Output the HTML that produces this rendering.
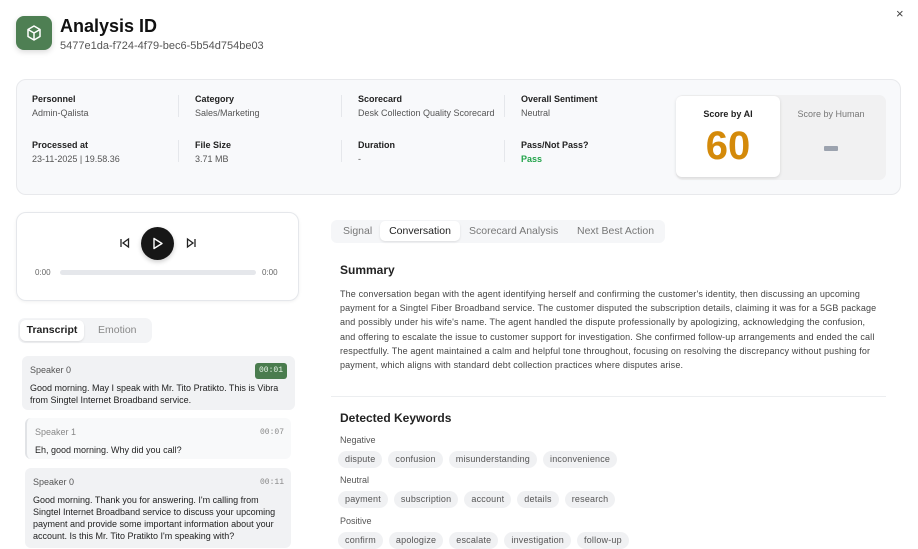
<!DOCTYPE html>
<html><head><meta charset="utf-8"><style>
*{box-sizing:border-box;margin:0;padding:0}
body{width:918px;height:537px;overflow:hidden;background:#fff;font-family:"Liberation Sans",sans-serif;color:#1f2937;position:relative}
.a{position:absolute}
.lbl{font-size:9px;font-weight:bold;color:#222}
.val{font-size:9px;color:#555}
.div{width:1px;height:22px;background:#e5e7eb}
.chip{display:inline-block;background:#f0f1f3;border-radius:9px;font-size:9px;color:#555;padding:3px 7px;margin-right:6px;height:17px;letter-spacing:.2px}
.msg{border-radius:6px;font-size:9px;line-height:12px;color:#222;padding:8px 8px}
.ts{font-family:"Liberation Mono",monospace;font-size:8px;color:#888;position:absolute;right:7px;top:9px}
</style></head><body>
<div class="a" style="left:16px;top:16px;width:36px;height:34px;background:#4e7f53;border-radius:8px;box-shadow:0 2px 6px rgba(0,0,0,.15)">
<svg width="36" height="34" viewBox="0 0 36 34"><g fill="none" stroke="#fff" stroke-width="1.5" stroke-linejoin="round"><path d="M18 10l6 3.5v7L18 24l-6-3.5v-7z"/><path d="M12 13.5l6 3.5 6-3.5M18 17v7"/></g></svg></div>
<div class="a" style="left:60px;top:16px;font-size:18px;font-weight:bold;color:#111">Analysis ID</div>
<div class="a" style="left:60px;top:40px;font-size:11px;color:#555">5477e1da-f724-4f79-bec6-5b54d754be03</div>
<div class="a" style="left:896px;top:6px;font-size:13px;color:#444">×</div>

<div class="a" style="left:16px;top:79px;width:885px;height:116px;background:#f8f9fb;border:1px solid #e8e9ec;border-radius:10px"></div>
<div class="a lbl" style="left:32px;top:94px">Personnel</div><div class="a val" style="left:32px;top:108px">Admin-Qalista</div>
<div class="a lbl" style="left:195px;top:94px">Category</div><div class="a val" style="left:195px;top:108px">Sales/Marketing</div>
<div class="a lbl" style="left:358px;top:94px">Scorecard</div><div class="a val" style="left:358px;top:108px">Desk Collection Quality Scorecard</div>
<div class="a lbl" style="left:521px;top:94px">Overall Sentiment</div><div class="a val" style="left:521px;top:108px">Neutral</div>
<div class="a lbl" style="left:32px;top:140px">Processed at</div><div class="a val" style="left:32px;top:154px">23-11-2025 | 19.58.36</div>
<div class="a lbl" style="left:195px;top:140px">File Size</div><div class="a val" style="left:195px;top:154px">3.71 MB</div>
<div class="a lbl" style="left:358px;top:140px">Duration</div><div class="a val" style="left:358px;top:154px">-</div>
<div class="a lbl" style="left:521px;top:140px">Pass/Not Pass?</div><div class="a val" style="left:521px;top:154px;color:#22a34a;font-weight:bold">Pass</div>
<div class="a div" style="left:178px;top:95px"></div><div class="a div" style="left:341px;top:95px"></div><div class="a div" style="left:504px;top:95px"></div>
<div class="a div" style="left:178px;top:140px"></div><div class="a div" style="left:341px;top:140px"></div><div class="a div" style="left:504px;top:140px"></div>
<div class="a" style="left:676px;top:95px;width:210px;height:85px;background:#f1f1f2;border-radius:7px"></div>
<div class="a" style="left:676px;top:96px;width:104px;height:81px;background:#fff;border-radius:6px;box-shadow:0 1px 3px rgba(0,0,0,.12)"></div>
<div class="a" style="left:676px;top:109px;width:104px;text-align:center;font-size:9px;font-weight:bold;color:#222">Score by AI</div>
<div class="a" style="left:676px;top:123px;width:104px;text-align:center;font-size:40px;font-weight:bold;color:#d48a0a;line-height:46px">60</div>
<div class="a" style="left:780px;top:109px;width:102px;text-align:center;font-size:9px;color:#777">Score by Human</div>
<div class="a" style="left:824px;top:146px;width:14px;height:5px;background:#9ca3af;border-radius:1px"></div>

<div class="a" style="left:16px;top:212px;width:283px;height:89px;border:1px solid #e5e7eb;border-radius:10px;box-shadow:0 1px 3px rgba(0,0,0,.06)"></div>
<svg class="a" style="left:119px;top:237px" width="12" height="12" viewBox="0 0 12 12"><g fill="none" stroke="#222" stroke-width="1.3"><path d="M2 2v8M9.5 2L4 6l5.5 4z"/></g></svg>
<div class="a" style="left:141px;top:227px;width:33px;height:33px;border-radius:50%;background:#171717;box-shadow:0 2px 5px rgba(0,0,0,.2)"></div>
<svg class="a" style="left:151px;top:237px" width="13" height="13" viewBox="0 0 13 13"><path d="M3 1.5l8 5-8 5z" fill="none" stroke="#fff" stroke-width="1.4" stroke-linejoin="round"/></svg>
<svg class="a" style="left:185px;top:237px" width="12" height="12" viewBox="0 0 12 12"><g fill="none" stroke="#222" stroke-width="1.3"><path d="M10 2v8M2.5 2L8 6l-5.5 4z"/></g></svg>
<div class="a" style="left:35px;top:268px;font-size:8px;color:#666">0:00</div>
<div class="a" style="left:60px;top:270px;width:196px;height:5px;background:#e5e7eb;border-radius:3px"></div>
<div class="a" style="left:262px;top:268px;font-size:8px;color:#666">0:00</div>

<div class="a" style="left:18px;top:318px;width:134px;height:25px;background:#f3f4f6;border-radius:7px"></div>
<div class="a" style="left:20px;top:320px;width:64px;height:21px;background:#fff;border-radius:6px;box-shadow:0 1px 2px rgba(0,0,0,.1);font-size:10.5px;font-weight:bold;text-align:center;line-height:21px;color:#222">Transcript</div>
<div class="a" style="left:98px;top:324px;font-size:10.5px;color:#888;line-height:13px">Emotion</div>

<div class="a msg" style="left:22px;top:356px;width:273px;height:54px;background:#f1f2f4">
<div style="color:#555;margin-bottom:6px">Speaker 0</div>Good morning. May I speak with Mr. Tito Pratikto. This is Vibra from Singtel Internet Broadband service.
<div class="ts" style="background:#4a7c4e;color:#e8f5e9;top:7px;right:8px;padding:2px 4px;border-radius:3px">00:01</div></div>
<div class="a msg" style="left:25px;top:418px;width:266px;height:41px;background:#f8f9fa;border-left:2px solid #e1e3e6">
<div style="color:#888;margin-bottom:6px">Speaker 1</div>Eh, good morning. Why did you call?<div class="ts">00:07</div></div>
<div class="a msg" style="left:25px;top:468px;width:266px;height:80px;background:#f1f2f4">
<div style="color:#555;margin-bottom:6px">Speaker 0</div>Good morning. Thank you for answering. I'm calling from Singtel Internet Broadband service to discuss your upcoming payment and provide some important information about your account. Is this Mr. Tito Pratikto I'm speaking with?<div class="ts">00:11</div></div>

<div class="a" style="left:331px;top:220px;width:334px;height:23px;background:#f5f6f8;border-radius:6px"></div>
<div class="a" style="left:343px;top:225px;font-size:10.5px;color:#777;line-height:13px">Signal</div>
<div class="a" style="left:380px;top:221px;width:80px;height:20px;background:#fff;border-radius:5px;box-shadow:0 1px 2px rgba(0,0,0,.1);font-size:10.5px;color:#222;text-align:center;line-height:20px">Conversation</div>
<div class="a" style="left:469px;top:225px;font-size:10.5px;color:#777;line-height:13px">Scorecard Analysis</div>
<div class="a" style="left:577px;top:225px;font-size:10.5px;color:#777;line-height:13px">Next Best Action</div>

<div class="a" style="left:340px;top:263px;font-size:12px;font-weight:bold;color:#222">Summary</div>
<div class="a" style="left:340px;top:287px;width:542px;font-size:9px;line-height:14.2px;letter-spacing:.15px;color:#444">The conversation began with the agent identifying herself and confirming the customer's identity, then discussing an upcoming payment for a Singtel Fiber Broadband service. The customer disputed the subscription details, claiming it was for a 5GB package and possibly under his wife's name. The agent handled the dispute professionally by apologizing, acknowledging the confusion, and offering to escalate the issue to customer support for investigation. She confirmed follow-up arrangements and ended the call respectfully. The agent maintained a calm and helpful tone throughout, focusing on resolving the discrepancy without pushing for payment, which aligns with standard debt collection practices where disputes arise.</div>
<div class="a" style="left:331px;top:396px;width:555px;height:1px;background:#eceef0"></div>
<div class="a" style="left:340px;top:411px;font-size:12px;font-weight:bold;color:#222">Detected Keywords</div>
<div class="a" style="left:340px;top:435px;font-size:9px;color:#555">Negative</div>
<div class="a" style="left:338px;top:449px;white-space:nowrap"><span class="chip">dispute</span><span class="chip">confusion</span><span class="chip">misunderstanding</span><span class="chip">inconvenience</span></div>
<div class="a" style="left:340px;top:475px;font-size:9px;color:#555">Neutral</div>
<div class="a" style="left:338px;top:489px;white-space:nowrap"><span class="chip">payment</span><span class="chip">subscription</span><span class="chip">account</span><span class="chip">details</span><span class="chip">research</span></div>
<div class="a" style="left:340px;top:516px;font-size:9px;color:#555">Positive</div>
<div class="a" style="left:338px;top:530px;white-space:nowrap"><span class="chip">confirm</span><span class="chip">apologize</span><span class="chip">escalate</span><span class="chip">investigation</span><span class="chip">follow-up</span></div>
</body></html>
